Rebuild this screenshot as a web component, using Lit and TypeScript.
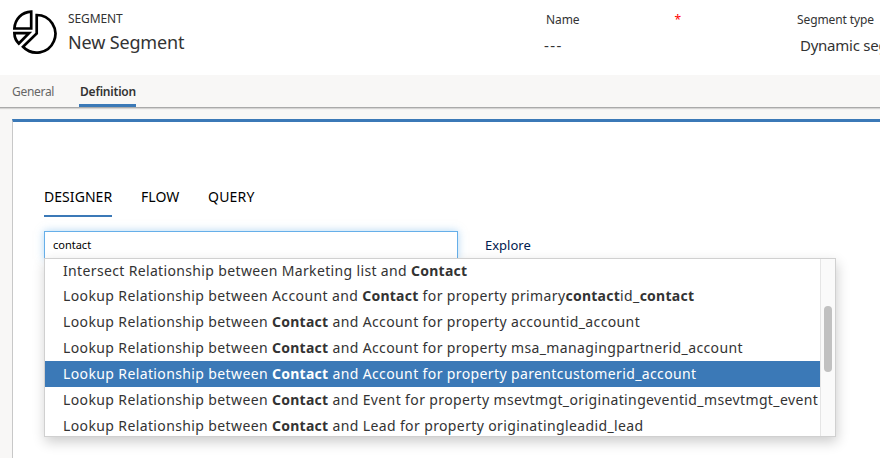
import { LitElement, html, css } from "lit";
import { customElement } from "lit/decorators.js";

const OPTIONS = [
  "Intersect Relationship between Marketing list and *Contact*",
  "Lookup Relationship between Account and *Contact* for property primary*contact*id_*contact*",
  "Lookup Relationship between *Contact* and Account for property accountid_account",
  "Lookup Relationship between *Contact* and Account for property msa_managingpartnerid_account",
  "Lookup Relationship between *Contact* and Account for property parentcustomerid_account",
  "Lookup Relationship between *Contact* and Event for property msevtmgt_originatingeventid_msevtmgt_event",
  "Lookup Relationship between *Contact* and Lead for property originatingleadid_lead",
];
const ACTIVE = 4;

@customElement("segment-header")
class SegmentHeader extends LitElement {
  static styles = css`
    :host { display: flex; height: 75px; background: #fff; color: #333; overflow: hidden; }
    .icon { width: 48px; height: 48px; margin: 8px 0 0 11px; flex: none; }
    .title { width: 478px; margin-left: 9px; padding-top: 11px; flex: none; }
    .kind { font-size: 12px; line-height: 16px; letter-spacing: -0.1px; }
    .name { font-size: 18px; line-height: 24px; margin-top: 3px; letter-spacing: -0.15px; }
    .field { padding-top: 12px; flex: none; white-space: nowrap; }
    .first { width: 251px; }
    .label { display: flex; font-size: 12px; line-height: 16px; letter-spacing: -0.1px; }
    .star { color: #f00; margin-left: 95px; }
    .value { font-size: 15px; line-height: 20px; margin-top: 7px; }
    .dashes { letter-spacing: 1.4px; margin-left: -2px; }
    .dyn { margin-left: 3px; letter-spacing: -0.25px; }
  `;
  render() {
    return html`
      <svg class="icon" viewBox="11 8 48 48" fill="none" stroke="#000" stroke-width="2.7">
        <path d="M36.7 15A18.8 18.8 0 1 1 23 46.8L36.7 33.4Z" />
        <path d="M31.2 11.6V28.5H14.4C15 19 21.5 12.2 31.2 11.6Z" />
        <path d="M14.4 33.1H29L18.8 43.5C15.8 40.6 14.5 37 14.4 33.1Z" />
      </svg>
      <div class="title">
        <div class="kind">SEGMENT</div>
        <div class="name">New Segment</div>
      </div>
      <div class="field first">
        <div class="label"><span>Name</span><span class="star">*</span></div>
        <div class="value dashes">---</div>
      </div>
      <div class="field">
        <div class="label">Segment type</div>
        <div class="value dyn">Dynamic segment</div>
      </div>
    `;
  }
}

@customElement("relationship-list")
class RelationshipList extends LitElement {
  static styles = css`
    :host { display: flex; box-sizing: border-box; width: 792px; height: 179px; border: 1px solid #d0d0d0; background: #fff; box-shadow: 1px 5px 12px rgba(0, 0, 0, 0.2); overflow: hidden; }
    .rows { width: 775px; flex: none; margin-top: -2px; }
    .row { height: 26px; line-height: 26px; padding-left: 18px; font-size: 14px; letter-spacing: 0.38px; color: #333; white-space: pre; }
    .row:first-child { line-height: 28px; letter-spacing: 0.35px; }
    .row b { font-weight: 700; letter-spacing: 0.25px; }
    .active { background: #3b79b7; color: #fff; }
    .track { flex: 1; box-sizing: border-box; border-left: 1px solid #e5e5e5; background: #fafafa; padding: 47px 0 0 3px; }
    .thumb { width: 8px; height: 66px; border-radius: 4px; background: #c1c1c1; }
  `;
  render() {
    return html`
      <div class="rows">
        ${OPTIONS.map((text, i) => html`<div class="row ${i === ACTIVE ? "active" : ""}">${text
          .split("*")
          .map((part, j) => (j % 2 ? html`<b>${part}</b>` : part))}</div>`)}
      </div>
      <div class="track"><div class="thumb"></div></div>
    `;
  }
}

@customElement("app-root")
class AppRoot extends LitElement {
  static styles = css`
    :host { display: block; width: 880px; height: 458px; overflow: hidden; background: #f8f7f6; font-family: "Noto Sans", "Open Sans", sans-serif; }
    .tabs { display: flex; box-sizing: border-box; height: 33px; padding-left: 12px; border-bottom: 1px solid #aaa; box-shadow: 0 1px 1px rgba(0, 0, 0, 0.14); font-size: 12px; line-height: 33px; color: #666; }
    .tab { width: 67px; letter-spacing: -0.3px; }
    .current { box-sizing: border-box; width: 57px; height: 32px; border-bottom: 3px solid #3b79b7; font-weight: 600; letter-spacing: -0.2px; padding-left: 1px; color: #333; }
    .panel { box-sizing: border-box; height: 339px; margin: 11px 0 0 12px; border-top: 3px solid #3b79b7; border-left: 1px solid #c8c8c8; background: #fff; padding: 64px 0 0 31px; }
    .views { display: flex; gap: 29px; height: 31px; font-size: 14px; line-height: 22px; color: #000; }
    .view { box-sizing: border-box; height: 31px; }
    .designer { width: 68px; border-bottom: 2px solid #3b79b7; letter-spacing: 0.05px; }
    .flow { width: 38px; letter-spacing: 0.05px; }
    .query { letter-spacing: 0.2px; }
    .search { display: flex; margin-top: 14px; }
    .box { box-sizing: border-box; width: 414px; height: 28px; border: 1px solid #66afe9; padding-left: 8px; font-size: 11px; line-height: 26px; color: #000; box-shadow: 0 0 8px rgba(102, 175, 233, 0.5); }
    .explore { margin-left: 27px; font-size: 13px; line-height: 28px; color: #002050; }
    relationship-list { position: relative; margin-top: -1px; }
  `;
  render() {
    return html`
      <segment-header></segment-header>
      <div class="tabs">
        <div class="tab">General</div>
        <div class="current">Definition</div>
      </div>
      <div class="panel">
        <div class="views">
          <div class="view designer">DESIGNER</div>
          <div class="view flow">FLOW</div>
          <div class="view query">QUERY</div>
        </div>
        <div class="search">
          <div class="box">contact</div>
          <div class="explore">Explore</div>
        </div>
        <relationship-list></relationship-list>
      </div>
    `;
  }
}
